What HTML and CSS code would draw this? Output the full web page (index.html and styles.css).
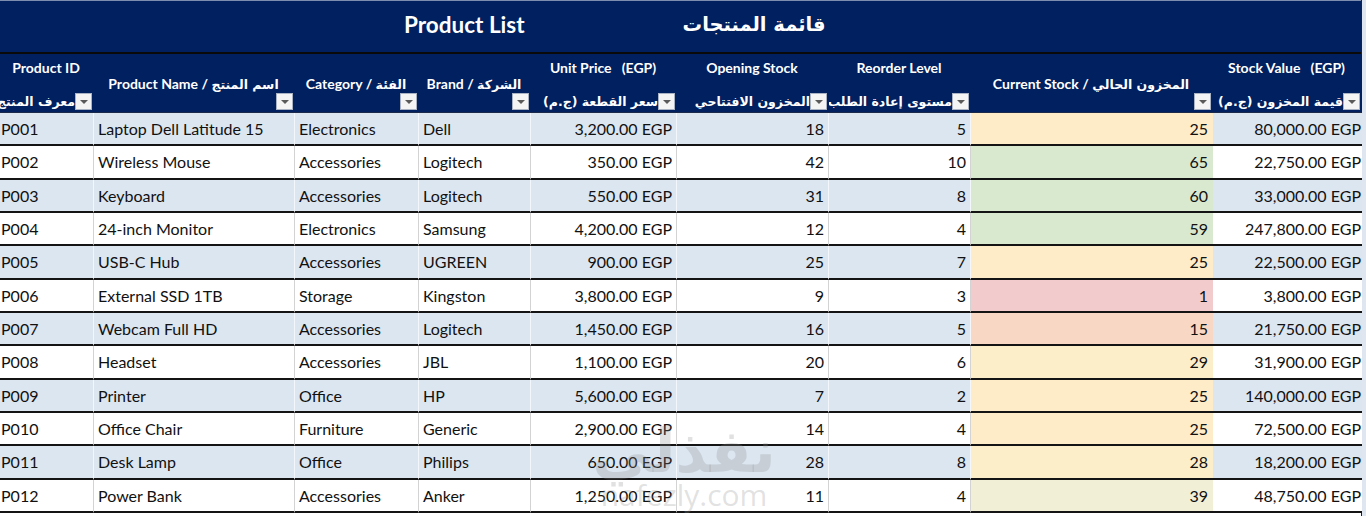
FILE: index.html
```html
<!DOCTYPE html>
<html lang="en">
<head>
<meta charset="utf-8">
<title>Product List</title>
<link rel="stylesheet" href="styles.css">
</head>
<body>
<div class="sheet">
  <div class="title-bar">
    <span class="title-en">Product List</span>
    <span class="title-ar" dir="rtl">قائمة المنتجات</span>
  </div>
  <table class="grid">
    <colgroup>
      <col class="c-id"><col class="c-name"><col class="c-cat"><col class="c-brand"><col class="c-price">
      <col class="c-open"><col class="c-reorder"><col class="c-current"><col class="c-value">
    </colgroup>
    <thead>
      <tr>
        <th><div class="hc two"><div class="l1">Product ID</div><div class="l2"><span class="ar" dir="rtl">معرف المنتج</span><span class="fb"></span></div></div></th>
        <th><div class="hc one"><div class="l1">Product Name / <span dir="rtl">اسم المنتج</span></div><div class="l2"><span class="fb"></span></div></div></th>
        <th><div class="hc one"><div class="l1">Category / <span dir="rtl">الفئة</span></div><div class="l2"><span class="fb"></span></div></div></th>
        <th><div class="hc one"><div class="l1">Brand / <span dir="rtl">الشركة</span></div><div class="l2"><span class="fb"></span></div></div></th>
        <th><div class="hc two"><div class="l1 pre">Unit Price   (EGP)</div><div class="l2"><span class="ar" dir="rtl">سعر القطعة (ج.م)</span><span class="fb"></span></div></div></th>
        <th><div class="hc two"><div class="l1">Opening Stock</div><div class="l2"><span class="ar" dir="rtl">المخزون الافتتاحي</span><span class="fb"></span></div></div></th>
        <th><div class="hc two"><div class="l1">Reorder Level</div><div class="l2"><span class="ar" dir="rtl">مستوى إعادة الطلب</span><span class="fb"></span></div></div></th>
        <th><div class="hc one"><div class="l1">Current Stock / <span dir="rtl">المخزون الحالي</span></div><div class="l2"><span class="fb"></span></div></div></th>
        <th><div class="hc two"><div class="l1 pre">Stock Value   (EGP)</div><div class="l2"><span class="ar" dir="rtl">قيمة المخزون (ج.م)</span><span class="fb"></span></div></div></th>
      </tr>
    </thead>
    <tbody>
      <tr class="band"><td class="id">P001</td><td>Laptop Dell Latitude 15</td><td>Electronics</td><td>Dell</td><td class="num">3,200.00 EGP</td><td class="num">18</td><td class="num">5</td><td class="num cur cs-yellow">25</td><td class="num val">80,000.00 EGP</td></tr>
      <tr><td class="id">P002</td><td>Wireless Mouse</td><td>Accessories</td><td>Logitech</td><td class="num">350.00 EGP</td><td class="num">42</td><td class="num">10</td><td class="num cur cs-green">65</td><td class="num val">22,750.00 EGP</td></tr>
      <tr class="band"><td class="id">P003</td><td>Keyboard</td><td>Accessories</td><td>Logitech</td><td class="num">550.00 EGP</td><td class="num">31</td><td class="num">8</td><td class="num cur cs-green">60</td><td class="num val">33,000.00 EGP</td></tr>
      <tr><td class="id">P004</td><td>24-inch Monitor</td><td>Electronics</td><td>Samsung</td><td class="num">4,200.00 EGP</td><td class="num">12</td><td class="num">4</td><td class="num cur cs-green">59</td><td class="num val">247,800.00 EGP</td></tr>
      <tr class="band"><td class="id">P005</td><td>USB-C Hub</td><td>Accessories</td><td>UGREEN</td><td class="num">900.00 EGP</td><td class="num">25</td><td class="num">7</td><td class="num cur cs-yellow">25</td><td class="num val">22,500.00 EGP</td></tr>
      <tr><td class="id">P006</td><td>External SSD 1TB</td><td>Storage</td><td>Kingston</td><td class="num">3,800.00 EGP</td><td class="num">9</td><td class="num">3</td><td class="num cur cs-red">1</td><td class="num val">3,800.00 EGP</td></tr>
      <tr class="band"><td class="id">P007</td><td>Webcam Full HD</td><td>Accessories</td><td>Logitech</td><td class="num">1,450.00 EGP</td><td class="num">16</td><td class="num">5</td><td class="num cur cs-peach">15</td><td class="num val">21,750.00 EGP</td></tr>
      <tr><td class="id">P008</td><td>Headset</td><td>Accessories</td><td>JBL</td><td class="num">1,100.00 EGP</td><td class="num">20</td><td class="num">6</td><td class="num cur cs-yellow2">29</td><td class="num val">31,900.00 EGP</td></tr>
      <tr class="band"><td class="id">P009</td><td>Printer</td><td>Office</td><td>HP</td><td class="num">5,600.00 EGP</td><td class="num">7</td><td class="num">2</td><td class="num cur cs-yellow">25</td><td class="num val">140,000.00 EGP</td></tr>
      <tr><td class="id">P010</td><td>Office Chair</td><td>Furniture</td><td>Generic</td><td class="num">2,900.00 EGP</td><td class="num">14</td><td class="num">4</td><td class="num cur cs-yellow">25</td><td class="num val">72,500.00 EGP</td></tr>
      <tr class="band"><td class="id">P011</td><td>Desk Lamp</td><td>Office</td><td>Philips</td><td class="num">650.00 EGP</td><td class="num">28</td><td class="num">8</td><td class="num cur cs-yellow2">28</td><td class="num val">18,200.00 EGP</td></tr>
      <tr><td class="id">P012</td><td>Power Bank</td><td>Accessories</td><td>Anker</td><td class="num">1,250.00 EGP</td><td class="num">11</td><td class="num">4</td><td class="num cur cs-yg">39</td><td class="num val">48,750.00 EGP</td></tr>
    </tbody>
  </table>
  <div class="watermark" aria-hidden="true">
    <span class="wm-ar" dir="rtl">نفذلي</span>
    <span class="wm-en">nafezly.com</span>
  </div>
</div>
</body>
</html>
```

FILE: styles.css
```css
* { box-sizing: border-box; }

html, body {
  margin: 0;
  padding: 0;
  background: #dfe6ef;
  font-family: "Lato", "DejaVu Sans", sans-serif;
  color: #111;
  overflow: hidden;
}

.sheet {
  position: relative;
  width: 1362px;
  height: 516px;
  background: #ffffff;
  border-right: 1px solid #222;
}

.title-bar {
  height: 54px;
  background: #002060;
  border-top: 1px solid #7d8db0;
  border-bottom: 2px solid #0a0a0a;
  display: flex;
  align-items: center;
  padding-left: 404px;
  padding-bottom: 5px;
  gap: 158px;
  color: #fff;
  font-weight: 700;
  font-size: 22.5px;
}

.title-ar {
  font-family: "DejaVu Sans", sans-serif;
  font-size: 19.5px;
}

.grid {
  border-collapse: separate;
  border-spacing: 0;
  table-layout: fixed;
  width: 1362px;
}

.c-id { width: 94px; }
.c-name { width: 201px; }
.c-cat { width: 124px; }
.c-brand { width: 112px; }
.c-price { width: 146px; }
.c-open { width: 152px; }
.c-reorder { width: 142px; }
.c-current { width: 242px; }
.c-value { width: 149px; }

thead th {
  background: #002060;
  color: #fff;
  padding: 0;
  font-weight: 700;
  font-size: 14px;
  height: 59px;
  vertical-align: top;
  border-bottom: 1px solid #1b2a4a;
}

.hc {
  height: 58px;
  display: flex;
  flex-direction: column;
  justify-content: space-between;
  padding: 5px 2px 2px 0;
}

.hc .l1 {
  text-align: center;
  white-space: nowrap;
  line-height: 17px;
  height: 17px;
}

.hc.one .l1 {
  margin-top: 16px;
}

.hc .pre { white-space: pre; }

.hc .l2 {
  display: flex;
  justify-content: flex-end;
  align-items: flex-end;
  height: 17px;
  min-width: 0;
}

.hc .ar {
  flex: 1 1 auto;
  min-width: 0;
  overflow: hidden;
  white-space: nowrap;
  text-align: right;
  direction: rtl;
  font-family: "DejaVu Sans", sans-serif;
  font-size: 12.5px;
  line-height: 17px;
}

.hc .l1 span[dir="rtl"] {
  font-family: "DejaVu Sans", sans-serif;
  font-size: 12.5px;
}

.fb {
  flex: 0 0 auto;
  width: 17px;
  height: 17px;
  background: #f4f4f4;
  border: 1px solid #a9b3c4;
  position: relative;
}

.fb::after {
  content: "";
  position: absolute;
  left: 4px;
  top: 6px;
  border-left: 4px solid transparent;
  border-right: 4px solid transparent;
  border-top: 4px solid #5a5a5a;
}

tbody td {
  height: 33.33px;
  padding: 0 3px 0 4px;
  font-size: 16px;
  white-space: nowrap;
  overflow: hidden;
  border-bottom: 2px solid #141414;
  border-right: 1px solid #d3d3d3;
  vertical-align: middle;
  background: #ffffff;
}

tbody tr.band td {
  background: #dce6f1;
  border-right-color: #f3f6fa;
}

tbody td.id { padding-left: 1px; }
tbody td.num { text-align: right; padding-right: 4px; }
tbody td.val { padding-right: 1px; border-right: none; }
tbody td.cur { padding-right: 5px; border-right: none; }

tbody td.cs-red, tbody tr.band td.cs-red { background: #f2cccc; }
tbody td.cs-peach, tbody tr.band td.cs-peach { background: #f8d8c4; }
tbody td.cs-yellow, tbody tr.band td.cs-yellow { background: #feebc8; }
tbody td.cs-yellow2, tbody tr.band td.cs-yellow2 { background: #fdeeca; }
tbody td.cs-yg, tbody tr.band td.cs-yg { background: #f1f0d6; }
tbody td.cs-green, tbody tr.band td.cs-green { background: #d9e9cf; }

.watermark {
  position: absolute;
  left: 596px;
  top: 418px;
  width: 176px;
  display: flex;
  flex-direction: column;
  align-items: center;
  color: rgba(140, 140, 140, 0.26);
  pointer-events: none;
  font-weight: 700;
}

.wm-ar {
  font-family: "DejaVu Sans", sans-serif;
  font-size: 60px;
  line-height: 66px;
}

.wm-en {
  font-family: "Open Sans", sans-serif;
  font-size: 30px;
  line-height: 30px;
  font-weight: 400;
  margin-top: -4px;
}
```
